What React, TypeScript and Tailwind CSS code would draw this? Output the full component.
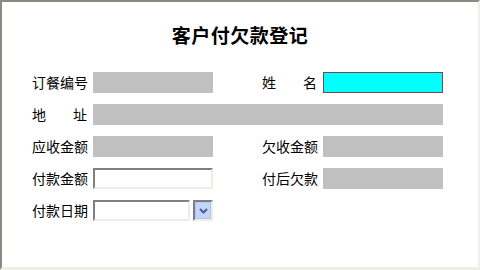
import React from "react";

const font = { fontFamily: '"Noto Sans CJK SC", "Liberation Sans", sans-serif' };

function Label({ text, spread }: { text: string; spread?: boolean }) {
  if (spread) {
    return (
      <div className="flex w-[55px] justify-between text-[14px] leading-[21px] text-black">
        {text.split("").map((c, i) => (
          <span key={i}>{c}</span>
        ))}
      </div>
    );
  }
  return <div className="w-[55px] text-[14px] leading-[21px] text-black whitespace-nowrap">{text}</div>;
}

function GrayBox({ w = "w-[120px]" }: { w?: string }) {
  return <div className={`${w} h-[21px] bg-[#c0c0c0]`} />;
}

function InsetBox({ w }: { w: string }) {
  return (
    <div
      className={`${w} h-[21px] bg-white border-2 border-t-[#7f7f7f] border-l-[#7f7f7f] border-b-[#efeee6] border-r-[#efeee6]`}
    />
  );
}

export default function App() {
  return (
    <div
      style={font}
      className="w-[480px] h-[270px] bg-white border-t-2 border-l-2 border-t-[#8a8a80] border-l-[#8a8a80] border-r-2 border-b-[3px] border-r-[#f0efe6] border-b-[#f0efe6] box-border overflow-hidden"
    >
      <div className="pt-[23px] h-[46px] w-full flex justify-center">
        <h1 className="text-[19px] leading-[20px] font-bold text-black tracking-[0.5px]">客户付欠款登记</h1>
      </div>

      <div className="mt-[24px] pl-[30px] flex flex-col gap-[11px]">
        {/* 第一行 */}
        <div className="flex items-center">
          <Label text="订餐编号" />
          <div className="ml-[6px]">
            <GrayBox />
          </div>
          <div className="ml-[49px]">
            <Label text="姓名" spread />
          </div>
          <div className="ml-[6px] w-[120px] h-[21px] bg-[#00ffff] border border-[#7a4848]" />
        </div>

        {/* 地址 */}
        <div className="flex items-center">
          <Label text="地址" spread />
          <div className="ml-[6px]">
            <GrayBox w="w-[350px]" />
          </div>
        </div>

        {/* 金额 */}
        <div className="flex items-center">
          <Label text="应收金额" />
          <div className="ml-[6px]">
            <GrayBox />
          </div>
          <div className="ml-[49px]">
            <Label text="欠收金额" />
          </div>
          <div className="ml-[6px]">
            <GrayBox />
          </div>
        </div>

        <div className="flex items-center">
          <Label text="付款金额" />
          <div className="ml-[6px]">
            <InsetBox w="w-[120px]" />
          </div>
          <div className="ml-[49px]">
            <Label text="付后欠款" />
          </div>
          <div className="ml-[6px]">
            <GrayBox />
          </div>
        </div>

        {/* 日期 */}
        <div className="flex items-center">
          <Label text="付款日期" />
          <div className="ml-[6px] flex gap-[3px]">
            <InsetBox w="w-[97px]" />
            <div className="w-[20px] h-[21px] border-2 border-t-[#7f7f7f] border-l-[#7f7f7f] border-b-[#efeee6] border-r-[#efeee6] bg-white">
              <div className="w-full h-full bg-[#c3d5fd] border border-[#b0c4f2] flex items-center justify-center">
                <svg width="9" height="6" viewBox="0 0 9 6">
                  <path d="M1 1 L4.5 4.5 L8 1" stroke="#4d6185" strokeWidth="2" fill="none" />
                </svg>
              </div>
            </div>
          </div>
        </div>
      </div>
    </div>
  );
}
